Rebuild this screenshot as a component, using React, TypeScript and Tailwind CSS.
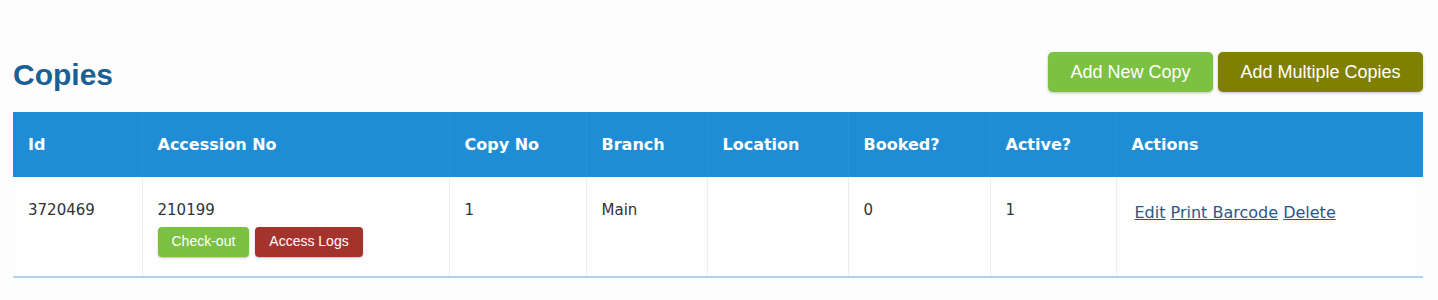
const columns = [
  { label: "Id", width: "w-[129px]" },
  { label: "Accession No", width: "w-[307px]" },
  { label: "Copy No", width: "w-[137px]" },
  { label: "Branch", width: "w-[121px]" },
  { label: "Location", width: "w-[141px]" },
  { label: "Booked?", width: "w-[142px]" },
  { label: "Active?", width: "w-[126px]" },
  { label: "Actions", width: "w-[307px]" },
];

const copies = [
  { id: 3720469, accession: "210199", copyNo: 1, branch: "Main", location: "", booked: 0, active: 1 },
];

const bodyCell = "border-l border-dotted border-[#dcdcdc] first:border-l-0 px-[15px] pt-[22px]";

export default function App() {
  return (
    <div className="min-h-[300px] bg-[#fdfdfd] pl-[13px] pr-[15px] pt-[52px] font-['DejaVu_Sans',sans-serif]">
      <div className="flex items-center justify-between h-[40px]">
        <h1 className="text-[30px] font-bold text-[#1b5f94] font-['Liberation_Sans',Arial,sans-serif] leading-none pt-[6px]">
          Copies
        </h1>
        <div className="flex gap-[5px] font-['Liberation_Sans',Arial,sans-serif] text-[18px] text-white">
          <button className="w-[165px] h-[40px] rounded-[5px] bg-[#7cc142] shadow-[0_1px_3px_rgba(0,0,0,0.25)]">
            Add New Copy
          </button>
          <button className="w-[205px] h-[40px] rounded-[5px] bg-[#808000] shadow-[0_1px_3px_rgba(0,0,0,0.25)]">
            Add Multiple Copies
          </button>
        </div>
      </div>

      <table className="mt-[20px] w-full table-fixed border-collapse">
        <thead>
          <tr className="bg-[#1f8dd5] h-[65px]">
            {columns.map((c) => (
              <th
                key={c.label}
                className={`${c.width} border-l border-dotted border-[#3598da] first:border-l-0 px-[15px] text-left text-[16px] font-bold text-white`}
              >
                {c.label}
              </th>
            ))}
          </tr>
        </thead>
        <tbody>
          {copies.map((c) => (
            <tr key={c.id} className="h-[100px] border-b-2 border-[#b0d3ec] bg-[#fefefe] align-top text-[15px] text-[#333]">
              <td className={bodyCell}>{c.id}</td>
              <td className={bodyCell}>
                <div>{c.accession}</div>
                <div className="mt-[5px] flex gap-[6px] font-['Liberation_Sans',Arial,sans-serif] text-[14px] text-white">
                  <button className="h-[30px] px-[14px] rounded-[4px] bg-[#7cc142] shadow-[0_1px_2px_rgba(0,0,0,0.25)]">
                    Check-out
                  </button>
                  <button className="h-[30px] px-[14px] rounded-[4px] bg-[#a5332d] shadow-[0_1px_2px_rgba(0,0,0,0.25)]">
                    Access Logs
                  </button>
                </div>
              </td>
              <td className={bodyCell}>{c.copyNo}</td>
              <td className={bodyCell}>{c.branch}</td>
              <td className={bodyCell}>{c.location}</td>
              <td className={bodyCell}>{c.booked}</td>
              <td className={bodyCell}>{c.active}</td>
              <td className="border-l border-dotted border-[#dcdcdc] pl-[18px] pr-[15px] pt-[24px] text-[16px]">
                <a href="#" className="text-[#2a5788] underline">Edit</a>{" "}
                <a href="#" className="text-[#2a5788] underline">Print Barcode</a>{" "}
                <a href="#" className="text-[#2a5788] underline">Delete</a>
              </td>
            </tr>
          ))}
        </tbody>
      </table>
    </div>
  );
}
